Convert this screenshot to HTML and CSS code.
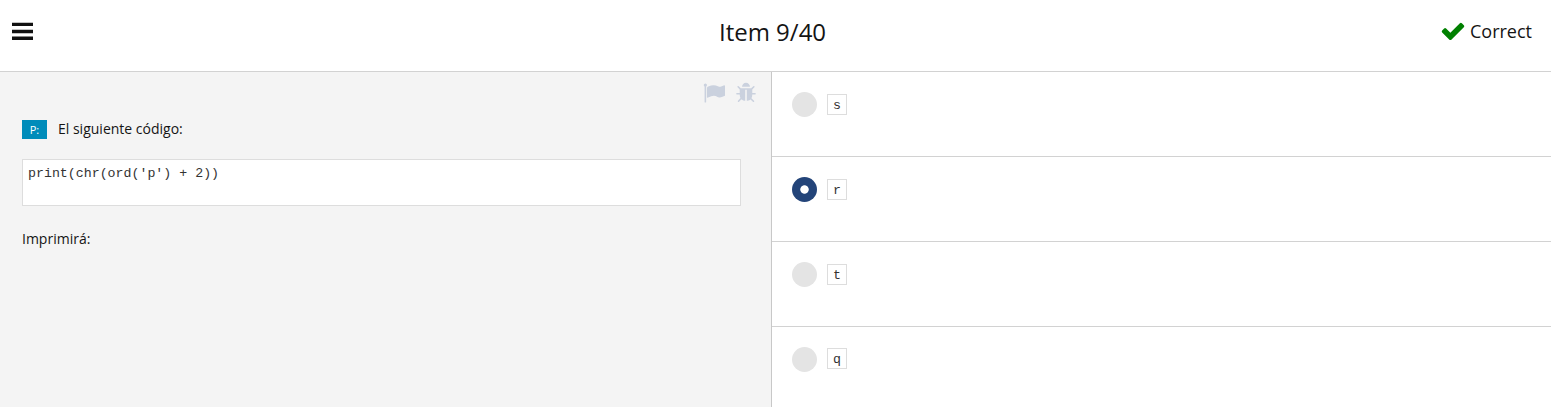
FILE: index.html
```html
<!DOCTYPE html>
<html lang="es">
<head>
<meta charset="utf-8">
<title>Item 9/40</title>
<link rel="stylesheet" href="styles.css">
</head>
<body>
<header class="topbar">
  <svg class="menu" viewBox="0 0 21 18"><path d="M0 .8h21V4H0zM0 7.8h21v3.400H0zM0 14.400h21V18H0z"/></svg>
  <h1 class="title">Item 9/40</h1>
  <div class="status">
    <svg class="check" viewBox="0 0 1792 1792"><path d="M1671 566q0 40-28 68l-724 724-136 136q-28 28-68 28t-68-28l-136-136-362-362q-28-28-28-68t28-68l136-136q28-28 68-28t68 28l294 295 656-657q28-28 68-28t68 28l136 136q28 28 28 68z"/></svg>
    <span>Correct</span>
  </div>
</header>
<main class="content">
  <section class="question">
    <div class="tools">
      <svg class="tool" viewBox="0 0 1792 1792"><path d="M320 256q0 72-64 110v1266q0 13-9.500 22.500t-22.500 9.500h-64q-13 0-22.500-9.500t-9.500-22.500v-1266q-64-38-64-110 0-53 37.500-90.500t90.500-37.500 90.500 37.500 37.500 90.500zm1472 64v763q0 25-12.500 38.500t-39.500 27.500q-215 116-369 116-61 0-123.500-22t-108.500-48-115.500-48-142.500-22q-192 0-464 146-17 9-33 9-26 0-45-19t-19-45v-742q0-32 31-55 21-14 79-43 236-120 421-120 107 0 200 29t219 88q38 19 88 19 54 0 117.500-21t110-47 88-47 54.500-21q26 0 45 19t19 45z"/></svg>
      <svg class="tool" viewBox="0 0 1792 1792"><path d="M1696 960q0 26-19 45t-45 19h-224q0 171-67 290l208 209q19 19 19 45t-19 45q-18 19-45 19t-45-19l-198-197q-5 5-15 13t-42 28.500-65 36.500-82 29-97 13v-896h-128v896q-51 0-101.500-13.500t-87-33-66-39-43.500-32.500l-15-14-183 207q-20 21-48 21-24 0-43-16-19-18-20.500-44.500t15.500-46.500l202-227q-58-114-58-274h-224q-26 0-45-19t-19-45 19-45 45-19h224v-294l-173-173q-19-19-19-45t19-45 45-19 45 19l173 173h844l173-173q19-19 45-19t45 19 19 45-19 45l-173 173v294h224q26 0 45 19t19 45zm-480-576h-640q0-133 93.500-226.500t226.500-93.500 226.500 93.500 93.500 226.500z"/></svg>
    </div>
    <div class="prompt"><span class="badge">P:</span><span>El siguiente código:</span></div>
    <pre class="code">print(chr(ord('p') + 2))</pre>
    <p class="after">Imprimirá:</p>
  </section>
  <section class="answers">
    <div class="answer"><span class="radio"></span><code class="choice">s</code></div>
    <div class="answer"><span class="radio selected"></span><code class="choice">r</code></div>
    <div class="answer"><span class="radio"></span><code class="choice">t</code></div>
    <div class="answer"><span class="radio"></span><code class="choice">q</code></div>
  </section>
</main>
</body>
</html>
```
FILE: styles.css
```css
* { box-sizing: border-box; }
body {
  margin: 0;
  height: 407px;
  overflow: hidden;
  display: flex;
  flex-direction: column;
  background: #fff;
  color: #141414;
  font: 14px/20px "Open Sans", sans-serif;
}
.topbar {
  height: 72px;
  flex: none;
  display: grid;
  grid-template-columns: 1fr auto 1fr;
  padding: 0 19px 0 12px;
  border-bottom: 1px solid #d2d2d2;
}
.menu { width: 21px; height: 18px; margin-top: 22px; fill: #111; }
.title {
  margin: 16px 0 0;
  font-size: 24px;
  line-height: 32px;
  font-weight: 400;
  transform: translateX(0.500px);
}
.status {
  display: flex;
  justify-content: flex-end;
  gap: 4px;
  padding-top: 18px;
  font-size: 18px;
  line-height: 26px;
}
.check { width: 26px; height: 26px; fill: #008000; }
.content { flex: 1; display: flex; min-height: 0; }
.question {
  width: 772px;
  padding: 10px 30px 0 22px;
  background: #f4f4f4;
  border-right: 1px solid #c8c8c8;
}
.tools { display: flex; justify-content: flex-end; gap: 10px; height: 22px; margin-right: -16px; }
.tool { width: 22px; height: 22px; fill: #cad1de; }
.prompt { display: flex; align-items: center; gap: 11px; height: 20px; margin-top: 15px; }
.badge {
  width: 25px;
  height: 19px;
  margin-top: 1px;
  background: #008cba;
  color: #fff;
  font-size: 11px;
  line-height: 19px;
  text-align: center;
}
.code {
  height: 47px;
  margin: 20px 0 0;
  padding: 5px;
  border: 1px solid #ddd;
  background: #fff;
  color: #333;
  font: 13.280px/18px "Liberation Mono", monospace;
}
.after { margin: 23px 0 0; }
.answers { flex: 1; }
.answer {
  height: 85px;
  padding: 20px 20px 0;
  display: flex;
  align-items: flex-start;
  gap: 10px;
  border-bottom: 1px solid #d2d2d2;
}
.radio { width: 25px; height: 25px; border-radius: 50%; background: #e4e4e4; }
.selected { background: radial-gradient(circle, #fff 3.800px, #234479 4.600px); }
.choice {
  width: 20px;
  height: 21px;
  margin-top: 2px;
  border: 1px solid #ddd;
  color: #333;
  font: 13.280px/21px "Liberation Mono", monospace;
  text-align: center;
}
.answer:last-child .choice { margin-top: 1px; }
```
